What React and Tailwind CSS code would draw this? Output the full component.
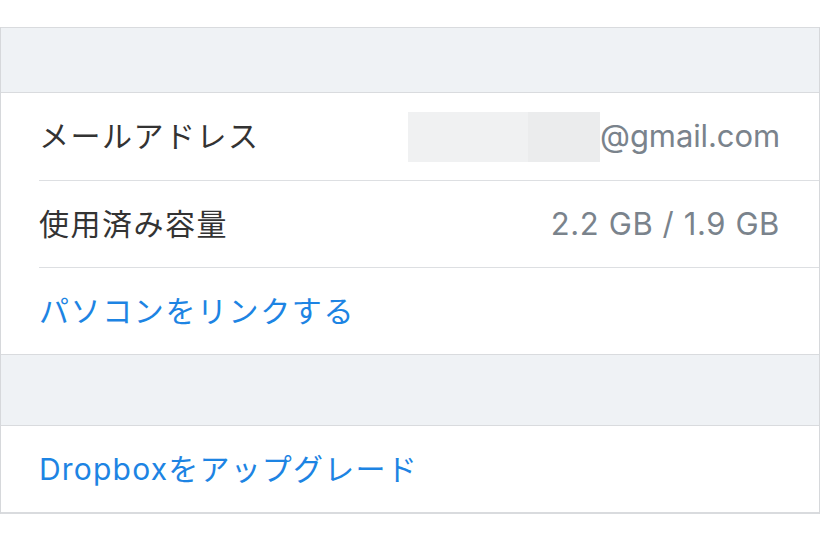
const font = { fontFamily: '"Inter", "Noto Sans CJK JP", sans-serif' };

const Row = ({ children, h = 'h-[87px]' }) => (
  <div className={`${h} pl-[38px]`}>
    <div className="h-full flex items-center justify-between pr-[39px] border-b border-[#dddfe2]">
      {children}
    </div>
  </div>
);

export default function App() {
  return (
    <div className="w-[828px] h-[552px] bg-white pt-[27px]" style={font}>
      <div className="w-[820px] border-x border-[#d6d8db]">
        <div className="h-[66px] bg-[#eff2f5] border-y border-[#d9dbde]" />

        <Row h="h-[88px]">
          <span className="text-[30px] text-[#333] tracking-[1.5px]">メールアドレス</span>
          <div className="flex items-center">
            <div className="flex h-[50px]">
              <div className="w-[120px] bg-[#f0f1f2]" />
              <div className="w-[72px] bg-[#ebeced]" />
            </div>
            <span className="text-[31px] text-[#7a838c] tracking-[-0.1px]">@gmail.com</span>
          </div>
        </Row>

        <Row>
          <span className="text-[30px] text-[#333] tracking-[1.5px]">使用済み容量</span>
          <span className="text-[31px] text-[#7a838c] tracking-[0.6px]">2.2 GB / 1.9 GB</span>
        </Row>

        <div className="h-[86px] pl-[38px] flex items-center">
          <span className="text-[30px] text-[#1d84e3] tracking-[1.6px]">パソコンをリンクする</span>
        </div>

        <div className="h-[72px] bg-[#eff2f5] border-y border-[#d9dbde]" />

        <div className="h-[88px] pl-[38px] flex items-center border-b-2 border-[#d9dbde]">
          <span className="text-[30px] text-[#1d84e3] tracking-[1.2px]">Dropboxをアップグレード</span>
        </div>
      </div>
    </div>
  );
}
